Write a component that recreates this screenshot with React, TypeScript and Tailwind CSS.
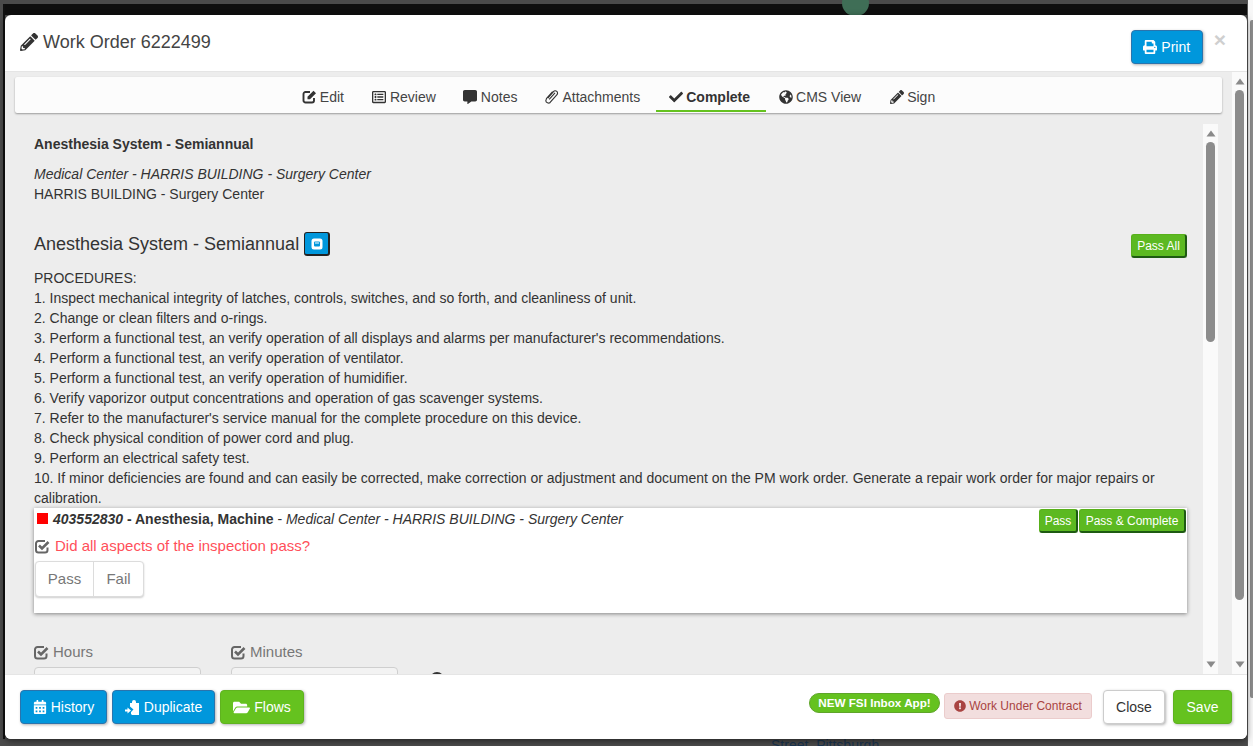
import React from "react";
import { FaPencilAlt, FaRegListAlt, FaCommentAlt, FaCheck, FaGlobeAmericas, FaPrint, FaCalendarAlt, FaFolderOpen, FaExclamationCircle } from "react-icons/fa";

const procedures = [
  "PROCEDURES:",
  "1. Inspect mechanical integrity of latches, controls, switches, and so forth, and cleanliness of unit.",
  "2. Change or clean filters and o-rings.",
  "3. Perform a functional test, an verify operation of all displays and alarms per manufacturer's recommendations.",
  "4. Perform a functional test, an verify operation of ventilator.",
  "5. Perform a functional test, an verify operation of humidifier.",
  "6. Verify vaporizor output concentrations and operation of gas scavenger systems.",
  "7. Refer to the manufacturer's service manual for the complete procedure on this device.",
  "8. Check physical condition of power cord and plug.",
  "9. Perform an electrical safety test.",
  "10. If minor deficiencies are found and can easily be corrected, make correction or adjustment and document on the PM work order. Generate a repair work order for major repairs or calibration.",
];

function CheckBoxIcon({ className }: { className?: string }) {
  return (
    <svg width="15" height="15" viewBox="0 0 15 15" fill="none" stroke="currentColor" className={`shrink-0 ${className ?? ""}`}>
      <path d="M12.5 8.5v2.5a2.5 2.5 0 0 1-2.5 2.5H3.5A2.5 2.5 0 0 1 1 11V4.5A2.5 2.5 0 0 1 3.5 2H10" strokeWidth="2" />
      <path d="M4 6.5 L7 9.5 L13.5 3" strokeWidth="2.6" />
    </svg>
  );
}

function EditIcon() {
  return (
    <svg width="15" height="15" viewBox="0 0 15 15" className="shrink-0">
      <path d="M12 9v2.5a2 2 0 0 1-2 2H3.5a2 2 0 0 1-2-2V5a2 2 0 0 1 2-2H8" fill="none" stroke="currentColor" strokeWidth="1.9" />
      <path d="M5.5 7.8 L11.5 1.8 L14 4.2 L8 10.2 L5.5 10.2 Z" fill="currentColor" />
    </svg>
  );
}

function ClipIcon() {
  return (
    <svg width="15" height="15" viewBox="0 0 15 15" fill="none" stroke="currentColor" strokeWidth="1.1" className="shrink-0">
      <path d="M3.8 9.2 L9.5 2.6 a2.3 2.3 0 0 1 3.5 3 L6.8 12.6 a2.4 2.4 0 0 1-4.6-2.2 a3 3 0 0 1 .6-1.3 L8.6 2.6" />
      <path d="M5.2 10.4 L11 3.8" />
    </svg>
  );
}

function Tab({ icon, label, active, tight }: { icon: React.ReactNode; label: string; active?: boolean; tight?: boolean }) {
  return (
    <div className={`flex h-[35px] items-center gap-[3px] border-b-2 pl-[12px] pt-[6px] ${tight ? "pr-[15px]" : "pr-[16px]"} ${active ? "border-[#65c21f] font-bold text-[#333]" : "border-transparent text-[#444]"}`}>
      <span className="flex w-[15px] items-center justify-center text-[14px] text-[#333]">{icon}</span>
      <span>{label}</span>
    </div>
  );
}

function Scrollbar({ thumbClass }: { thumbClass: string }) {
  return (
    <div className="flex w-[15px] shrink-0 flex-col items-center bg-[#fafafa]">
      <svg width="10" height="18" viewBox="0 0 10 18" className="shrink-0"><path d="M0.5 12.5 L5 6.5 L9.5 12.5 Z" fill="#8a8a8a" /></svg>
      <div className={`w-[9px] rounded-full bg-[#8c8c8c] ${thumbClass}`} />
      <div className="flex-1" />
      <svg width="10" height="18" viewBox="0 0 10 18" className="shrink-0"><path d="M0.5 5.5 L9.5 5.5 L5 11.5 Z" fill="#8a8a8a" /></svg>
    </div>
  );
}

function SmallGreen({ children, width }: { children: React.ReactNode; width: string }) {
  return (
    <button className={`flex h-[24px] items-center justify-center rounded-[3px] border border-[#58b01a] border-r-2 border-b-2 border-r-[#1e5a12] border-b-[#1e5a12] bg-[#5cb921] text-[12px] text-white ${width}`}>
      {children}
    </button>
  );
}

function FootBtn({ color, icon, label, width }: { color: "blue" | "green"; icon: React.ReactNode; label: string; width: string }) {
  return (
    <button className={`flex h-[34px] items-center justify-center gap-[4px] rounded-[4px] border text-[14px] text-white shadow-[1px_1px_3px_rgba(0,0,0,0.3)] ${width} ${color === "blue" ? "border-[#2a74ad] bg-[#0097dc]" : "border-[#5fb31f] bg-[#65c21f]"}`}>
      {icon}
      <span>{label}</span>
    </button>
  );
}

function DuplicateIcon() {
  return (
    <svg width="15" height="15" viewBox="0 0 15 15" fill="white" className="shrink-0">
      <path d="M5 3 h2 v-1 a2 2 0 0 1 4 0 v1 h3 v12 h-7 l-1 -1 v-2 l2.5 -2.5 -3.5 -3 z" />
      <path d="M0 9.5 h2.5 v-2 l3.5 3 -3.5 3 v-2 h-2.5 z" />
    </svg>
  );
}

function Field({ label, width }: { label: string; width: string }) {
  return (
    <div className={width}>
      <div className="flex h-[20px] items-center gap-[4px] text-[15px] text-[#777]">
        <CheckBoxIcon className="text-[#666]" />
        <span>{label}</span>
      </div>
      <div className="mt-[5px] h-[40px] rounded-[4px] border border-[#cfcfcf] bg-[#f3f3f3]" />
    </div>
  );
}

export default function App() {
  return (
    <div className="relative h-[746px] w-full overflow-hidden bg-[#4b4b4b] text-[14px] leading-[20px] text-[#333] [font-family:'Liberation_Sans',Arial,sans-serif]">
      <div className="absolute left-[4px] right-0 top-[4px] h-[11px] bg-[#0f0f0f]" />
      <div className="absolute left-[3px] top-[4px] h-[735px] w-[2px] bg-[#111]" />
      <div className="absolute left-[842px] top-[-10px] h-[26px] w-[27px] rounded-full bg-[#3f6e56]" />
      <div className="absolute left-[771px] top-[735px] text-[14px] text-[#1b3550]">Street, Pittsburgh</div>
      <div className="absolute bottom-0 left-[1247px] right-0 top-0 border-l border-[#555] bg-[#f7f7f7]" />
      <div className="absolute left-[1250px] right-0 top-[20px] h-[678px] rounded-l-[2px] bg-[#8c8c8c]" />

      <div className="relative ml-[5px] mt-[15px] flex h-[724px] w-[1242px] flex-col overflow-hidden rounded-[6px] bg-white shadow-[0_2px_6px_rgba(0,0,0,0.5)]">
        <header className="flex h-[57px] shrink-0 items-start border-b border-[#e5e5e5] pl-[15px] pr-[21px]">
          <div className="mt-[17px] flex items-center gap-[5px] text-[18px] text-[#444]">
            <FaPencilAlt className="text-[18px] text-[#333]" />
            <span>Work Order 6222499</span>
          </div>
          <div className="flex-1" />
          <button className="mt-[15px] flex h-[34px] w-[72px] items-center justify-center gap-[4px] rounded-[4px] border border-[#2a74ad] bg-[#0097dc] text-white shadow-[1px_1px_3px_rgba(0,0,0,0.3)]">
            <FaPrint className="text-[14px]" />
            <span>Print</span>
          </button>
          <div className="ml-[11px] mt-[13px] text-[21px] font-bold leading-[24px] text-[#cfcfcf]">×</div>
        </header>

        <div className="flex min-h-0 flex-1 bg-[#ededed]">
          <div className="flex min-w-0 flex-1 flex-col">
            <nav className="mx-[10px] mt-[5px] flex h-[36px] shrink-0 justify-center rounded-[2px] bg-[#fcfcfc] pl-[4px] shadow-[0_1px_2px_rgba(0,0,0,0.35)]">
              <Tab icon={<EditIcon />} label="Edit" />
              <Tab icon={<FaRegListAlt />} label="Review" tight />
              <Tab icon={<FaCommentAlt />} label="Notes" tight />
              <Tab icon={<ClipIcon />} label="Attachments" />
              <Tab icon={<FaCheck />} label="Complete" active />
              <Tab icon={<FaGlobeAmericas />} label="CMS View" />
              <Tab icon={<FaPencilAlt />} label="Sign" />
            </nav>
            <div className="mt-[11px] flex min-h-0 flex-1 pr-[14px]">
              <div className="min-w-0 flex-1 overflow-hidden pl-[29px] pr-[16px] pt-[10px]">
                <div className="font-bold">Anesthesia System - Semiannual</div>
                <div className="mt-[10px] italic">Medical Center - HARRIS BUILDING - Surgery Center</div>
                <div>HARRIS BUILDING - Surgery Center</div>
                <div className="mt-[27px] flex h-[26px] items-center">
                  <span className="text-[18px]">Anesthesia System - Semiannual</span>
                  <span className="ml-[5px] flex h-[24px] w-[26px] items-center justify-center rounded-[3px] border border-[#222] border-r-2 border-b-2 bg-[#0097dc]">
                    <svg width="12" height="12" viewBox="0 0 12 12"><rect x="0.5" y="0.5" width="11" height="11" rx="2.5" fill="white" /><rect x="3" y="3.5" width="6" height="5" rx="1" fill="#0097dc" /><rect x="4" y="4.5" width="4" height="1" fill="white" /></svg>
                  </span>
                  <div className="flex-1" />
                  <div className="mt-[4px]">
                    <SmallGreen width="w-[56px]">Pass All</SmallGreen>
                  </div>
                </div>
                <div className="mt-[11px]">
                  {procedures.map((p) => (
                    <div key={p}>{p}</div>
                  ))}
                </div>
                <div className="h-[105px] bg-white px-[3px] shadow-[0_1px_4px_rgba(0,0,0,0.45)]">
                  <div className="flex h-[25px] items-start">
                    <span className="mt-[5px] h-[11px] w-[11px] bg-[#ff0000]" />
                    <span className="ml-[5px] mt-[1px]">
                      <b><i>403552830</i> - Anesthesia, Machine</b> - <i>Medical Center - HARRIS BUILDING - Surgery Center</i>
                    </span>
                    <div className="flex-1" />
                    <div className="mr-[-2px] mt-[1px] flex gap-[1px]">
                      <SmallGreen width="w-[39px]">Pass</SmallGreen>
                      <SmallGreen width="w-[107px]">Pass &amp; Complete</SmallGreen>
                    </div>
                  </div>
                  <div className="ml-[-2px] mt-[3px] flex h-[20px] items-center gap-[5px] text-[15px] text-[#ff4f5a]">
                    <CheckBoxIcon className="text-[#666]" />
                    <span>Did all aspects of the inspection pass?</span>
                  </div>
                  <div className="ml-[-2px] mt-[5px] flex h-[36px] w-[109px] rounded-[4px] border border-[#dcdcdc] bg-white text-[15px] text-[#777] shadow-[0_1px_2px_rgba(0,0,0,0.2)]">
                    <div className="flex w-[58px] items-center justify-center border-r border-[#dcdcdc]">Pass</div>
                    <div className="flex flex-1 items-center justify-center">Fail</div>
                  </div>
                </div>
                <div className="mt-[29px] flex gap-[30px]">
                  <Field label="Hours" width="w-[167px]" />
                  <Field label="Minutes" width="w-[167px]" />
                  <div className="ml-[2px] mt-[30px] h-[14px] w-[14px] shrink-0 rounded-full bg-[#333]" />
                </div>
              </div>
              <Scrollbar thumbClass="h-[200px]" />
            </div>
          </div>
          <Scrollbar thumbClass="h-[510px]" />
        </div>

        <footer className="flex h-[65px] shrink-0 items-start border-t border-[#e5e5e5] bg-white pl-[15px] pr-[15px] pt-[15px]">
          <div className="flex gap-[5px]">
            <FootBtn color="blue" icon={<FaCalendarAlt />} label="History" width="w-[87px]" />
            <FootBtn color="blue" icon={<DuplicateIcon />} label="Duplicate" width="w-[103px]" />
            <FootBtn color="green" icon={<FaFolderOpen className="text-[17px]" />} label="Flows" width="w-[84px]" />
          </div>
          <div className="flex-1" />
          <div className="mt-[3px] flex h-[20px] w-[131px] items-center justify-center rounded-full border border-[#5fa52a] bg-[#65c21f] text-[11.7px] font-bold text-white">NEW FSI Inbox App!</div>
          <div className="ml-[4px] mt-[3px] flex h-[26px] w-[148px] items-center justify-center gap-[3px] rounded-[3px] border border-[#ebcccc] bg-[#f2dede] text-[12px] text-[#a94442]">
            <FaExclamationCircle className="text-[12px]" />
            <span>Work Under Contract</span>
          </div>
          <button className="ml-[11px] h-[34px] w-[62px] rounded-[4px] border border-[#ccc] bg-white text-[#333] shadow-[1px_1px_3px_rgba(0,0,0,0.3)]">Close</button>
          <button className="ml-[8px] h-[34px] w-[59px] rounded-[4px] border border-[#5fb31f] bg-[#65c21f] text-white shadow-[1px_1px_3px_rgba(0,0,0,0.25)]">Save</button>
        </footer>
      </div>
    </div>
  );
}
